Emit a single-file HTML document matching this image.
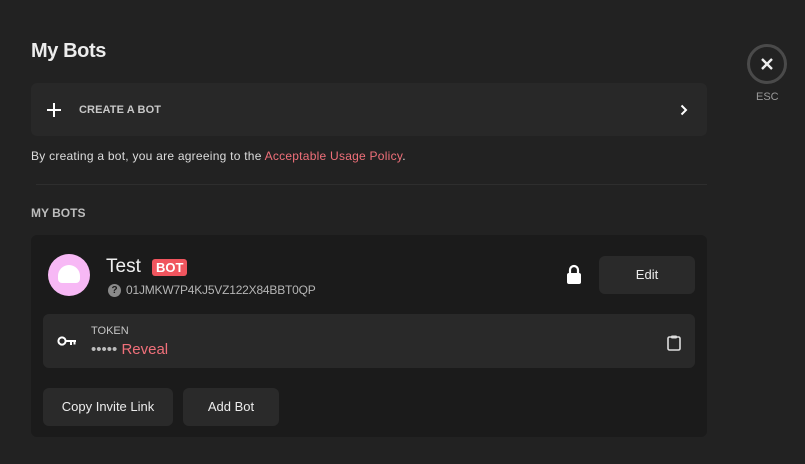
<!DOCTYPE html>
<html><head><meta charset="utf-8"><style>
*{box-sizing:border-box;margin:0;padding:0}
body{width:805px;height:464px;background:#222222;font-family:"Liberation Sans",sans-serif;color:#e8e8e8;position:relative;overflow:hidden}
.abs{position:absolute}
h1{position:absolute;left:31px;top:40px;font-size:20px;font-weight:bold;color:#ececec;letter-spacing:-0.4px}
.create{left:31px;top:83px;width:676px;height:53px;background:#282828;border-radius:6px}
.create .lbl{position:absolute;left:48px;top:21px;font-size:11px;font-weight:bold;color:#c8c8c8;letter-spacing:0.1px}
.note{left:31px;top:149px;font-size:12px;color:#dcdcdc;letter-spacing:0.25px}
.note span{color:#f0707a}
.hr{left:36px;top:184px;width:671px;height:1px;background:#2e2e2e}
.sec{left:31px;top:206px;font-size:12px;font-weight:bold;color:#bdbdbd}
.card{left:31px;top:235px;width:676px;height:202px;background:#1b1b1b;border-radius:6px}
.av{left:48px;top:254px;width:42px;height:42px;border-radius:50%;background:#f7b8f5}
.av:after{content:"";position:absolute;left:10px;top:11px;width:22px;height:18px;background:#fff;border-radius:11px 11px 4px 4px}
.name{left:106px;top:256px;font-size:19px;color:#f0f0f0}
.badge{left:152px;top:259px;height:17px;padding:0 4px;background:#f0555e;color:#fff;border-radius:3px;font-size:13px;line-height:17px;font-weight:bold}
.id{left:126px;top:283px;font-size:12px;color:#b5b5b5;letter-spacing:-0.2px}
.q{left:108px;top:284px;width:13px;height:13px;border-radius:50%;background:#8a8a8a;color:#1b1b1b;font-size:10px;font-weight:bold;text-align:center;line-height:13px}
.btn{background:#2a2a2a;border-radius:6px;font-size:13px;color:#ececec;text-align:center}
.token{left:43px;top:314px;width:652px;height:54px;background:#292929;border-radius:6px}
.tk{left:91px;top:325px;font-size:11px;color:#c5c5c5}
.dots{left:91px;top:341px;font-size:15px;color:#bbb}
.dots span{color:#f0707a}
.esc{left:747px;top:44px;width:40px;height:40px;border:3px solid #4a4a4a;border-radius:50%}
.esclbl{left:756px;top:91px;font-size:11px;color:#9a9a9a}
</style></head><body>
<h1>My Bots</h1>
<div class="abs create">
<svg class="abs" style="left:16px;top:20px" width="14" height="14"><path d="M7 0V14M0 7H14" stroke="#fff" stroke-width="2"/></svg>
<div class="lbl">CREATE A BOT</div>
<svg class="abs" style="left:649px;top:21px" width="8" height="12"><path d="M1.5 1.5L6 6L1.5 10.5" stroke="#fff" stroke-width="2" fill="none"/></svg>
</div>
<div class="abs note">By creating a bot, you are agreeing to the <span>Acceptable Usage Policy</span>.</div>
<div class="abs hr"></div>
<div class="abs sec">MY BOTS</div>
<div class="abs card"></div>
<div class="abs av"></div>
<div class="abs name">Test</div>
<div class="abs badge">BOT</div>
<div class="abs q">?</div>
<div class="abs id">01JMKW7P4KJ5VZ122X84BBT0QP</div>
<svg class="abs" style="left:566px;top:264px" width="16" height="21"><path d="M4 9V6a4 4 0 0 1 8 0v3" stroke="#fff" stroke-width="2.2" fill="none"/><rect x="1" y="9" width="14" height="11" rx="2" fill="#fff"/></svg>
<div class="abs btn" style="left:599px;top:256px;width:96px;height:38px;line-height:38px">Edit</div>
<div class="abs token"></div>
<svg class="abs" style="left:57px;top:335px" width="20" height="12"><circle cx="5" cy="6" r="3.6" stroke="#fff" stroke-width="2" fill="none"/><path d="M8.5 6H19M14 6V10M17.5 6V9.5" stroke="#fff" stroke-width="2" fill="none"/></svg>
<div class="abs tk">TOKEN</div>
<div class="abs dots">••••• <span>Reveal</span></div>
<svg class="abs" style="left:667px;top:335px" width="14" height="16"><rect x="1" y="2" width="12" height="13" rx="1.5" stroke="#ddd" stroke-width="1.6" fill="none"/><rect x="4" y="0.5" width="6" height="3" rx="1" fill="#ddd"/></svg>
<div class="abs btn" style="left:43px;top:388px;width:130px;height:38px;line-height:38px">Copy Invite Link</div>
<div class="abs btn" style="left:183px;top:388px;width:96px;height:38px;line-height:38px">Add Bot</div>
<div class="abs esc"><svg class="abs" style="left:10px;top:10px" width="14" height="14"><path d="M2 2L12 12M12 2L2 12" stroke="#eee" stroke-width="2.4"/></svg></div>
<div class="abs esclbl">ESC</div>
</body></html>
